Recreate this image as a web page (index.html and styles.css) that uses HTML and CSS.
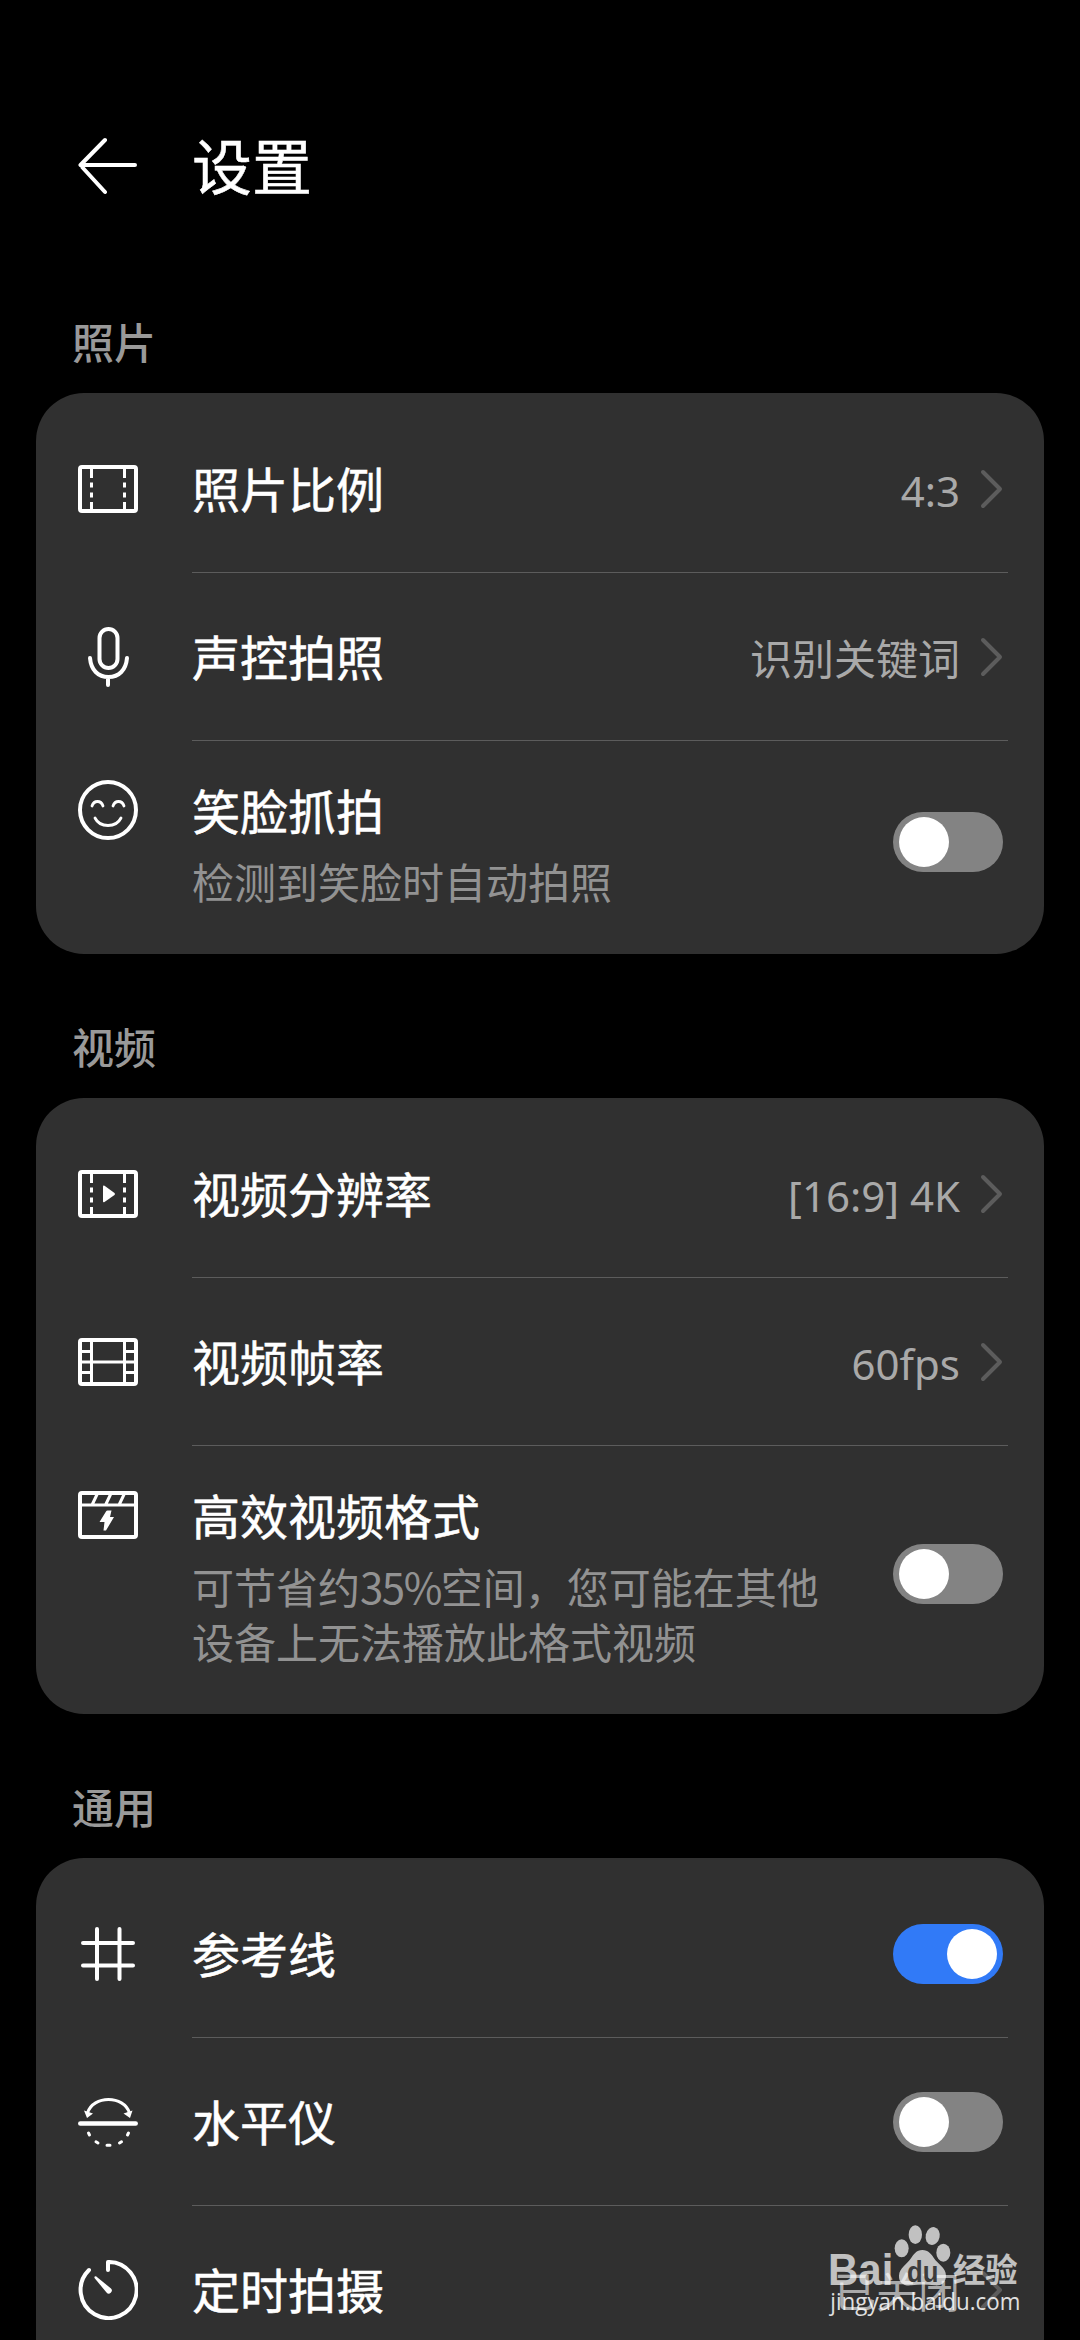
FILE: index.html
```html
<!DOCTYPE html>
<html lang="zh-CN">
<head>
<meta charset="utf-8">
<title>设置</title>
<link rel="stylesheet" href="styles.css">
</head>
<body>
<main class="screen">
  <header class="header">
    <svg class="icon" viewBox="0 0 60 60" stroke-width="4"><path d="M27 5 2.500 30H57M4.500 32.500 27 57"/></svg>
    <h1 class="title">设置</h1>
  </header>

  <h2 class="section">照片</h2>
  <section class="card">
    <div class="row">
      <svg class="icon" viewBox="0 0 60 60"><rect x="2" y="8" width="56" height="44" rx="2"/><path stroke-width="3" d="M13.500 8v11m0 4.500v5m0 5v5m0 4.500v9M46.500 8v11m0 4.500v5m0 5v5m0 4.500v9" stroke-linecap="butt"/></svg>
      <div class="label">照片比例</div>
      <div class="value">4:3</div>
      <svg class="chevron" viewBox="0 0 24 42"><path d="M4 4 21 21 4 38"/></svg>
    </div>
    <div class="row">
      <svg class="icon" viewBox="0 0 60 60"><rect x="21.500" y="2" width="18" height="39" rx="9"/><path d="M12 31c1 12 8 19 18.500 19S48 43 49 31M30 50v8"/></svg>
      <div class="label">声控拍照</div>
      <div class="value">识别关键词</div>
      <svg class="chevron" viewBox="0 0 24 42"><path d="M4 4 21 21 4 38"/></svg>
    </div>
    <div class="row row-detail">
      <svg class="icon" viewBox="0 0 60 60"><circle cx="30" cy="30" r="28"/><path stroke-width="2.800" d="M14 26c2-6 9-6 11 0M35 26c2-6 9-6 11 0M17 38c5 10 21 10 26 0"/></svg>
      <div class="label">笑脸抓拍<p class="hint">检测到笑脸时自动拍照</p></div>
      <div class="toggle"></div>
    </div>
  </section>

  <h2 class="section">视频</h2>
  <section class="card">
    <div class="row">
      <svg class="icon" viewBox="0 0 60 60"><rect x="2" y="8" width="56" height="44" rx="2"/><path stroke-width="3" d="M13.500 8v11m0 4.500v5m0 5v5m0 4.500v9M46.500 8v11m0 4.500v5m0 5v5m0 4.500v9" stroke-linecap="butt"/><path class="solid" d="M25 22.500q0-1.500 1.500-.7L36.500 29q1 1 0 2L26.500 38q-1.500.8-1.500-.7Z"/></svg>
      <div class="label">视频分辨率</div>
      <div class="value">[16:9] 4K</div>
      <svg class="chevron" viewBox="0 0 24 42"><path d="M4 4 21 21 4 38"/></svg>
    </div>
    <div class="row">
      <svg class="icon" viewBox="0 0 60 60"><rect x="2" y="8" width="56" height="44" rx="2"/><path stroke-width="3" d="M13.500 8v44M46.500 8v44M2 19.500h11.500M2 40.500h11.500M46.500 19.500H58M46.500 40.500H58"/><path stroke-width="3" d="M2 30h56"/></svg>
      <div class="label">视频帧率</div>
      <div class="value">60fps</div>
      <svg class="chevron" viewBox="0 0 24 42"><path d="M4 4 21 21 4 38"/></svg>
    </div>
    <div class="row row-detail">
      <svg class="icon" viewBox="0 0 60 60"><rect x="2" y="8" width="56" height="44" rx="2"/><path stroke-width="3" d="M2 20h56M19 9.500 14 20M32.500 9.500 27.500 20M46 9.500 41 20"/><path class="solid" d="M28 26.500q.5-1 1.500-1h4l-1.500 6.500h4l-8 13.500h-2.500l1-8.500h-5Z"/></svg>
      <div class="label">高效视频格式<p class="hint">可节省约<span class="digits">35%</span>空间，您可能在其他<br>设备上无法播放此格式视频</p></div>
      <div class="toggle"></div>
    </div>
  </section>

  <h2 class="section">通用</h2>
  <section class="card">
    <div class="row">
      <svg class="icon" viewBox="0 0 60 60"><path d="M19 5v50M41.500 5v50M5 19h50M5 41.500h50"/></svg>
      <div class="label">参考线</div>
      <div class="toggle on"></div>
    </div>
    <div class="row">
      <svg class="icon" viewBox="0 0 60 60"><path stroke-width="4.500" d="M2.300 31.500h55.400"/><path stroke-width="3" d="M9.500 21C15 3 46 3 51.500 21"/><path class="solid" d="M6 18.500l9 3L9 26ZM54.500 18.500l-9 3 6.500 4.500Z"/><path stroke-width="3" d="M10.500 41l1 2M18 49.800l2 1.200M29 53.200h3M41.500 51l2-1.200M49.500 43l1-2"/></svg>
      <div class="label">水平仪</div>
      <div class="toggle"></div>
    </div>
    <div class="row">
      <svg class="icon" viewBox="0 0 60 60"><path d="M30 10V2A28 28 0 1 1 11 10"/><path class="solid" d="M18 16.200 33 28.500a3 3 0 0 1-4.500 4L16.500 18q-.5-2 1.500-1.800Z"/></svg>
      <div class="label">定时拍摄</div>
      <div class="value">已关闭</div>
      <svg class="chevron" viewBox="0 0 24 42"><path d="M4 4 21 21 4 38"/></svg>
    </div>
  </section>

  <svg class="watermark" viewBox="81 99 585 282">
    <g class="wm-mark">
      <ellipse cx="305" cy="175" rx="21" ry="27"/>
      <ellipse cx="346" cy="134" rx="20" ry="28"/>
      <ellipse cx="398" cy="138" rx="21" ry="27" transform="rotate(12 398 138)"/>
      <ellipse cx="430" cy="188" rx="21" ry="27"/>
      <path d="M367 180c18 0 28 13 35 25 10 16 36 28 36 52 0 22-16 31-34 29-25-3-46-3-70 0-22 3-38-8-37-29 1-23 25-35 36-52 8-12 16-25 34-25Z"/>
      <text class="wm-brand" x="84" y="284" textLength="196" lengthAdjust="spacingAndGlyphs">Bai</text>
      <text class="wm-cjk" x="459" y="275" textLength="194" lengthAdjust="spacingAndGlyphs">经验</text>
    </g>
    <text class="wm-du" x="321" y="277" textLength="94" lengthAdjust="spacingAndGlyphs">du</text>
    <text class="wm-url" x="91" y="361" textLength="570" lengthAdjust="spacingAndGlyphs">jingyan.baidu.com</text>
  </svg>
</main>
</body>
</html>
```
FILE: styles.css
```css
* {
  box-sizing: border-box;
  margin: 0;
  padding: 0;
}

body {
  background: #000;
  color: #fff;
  font-family: "Noto Sans CJK SC", sans-serif;
}

.screen {
  position: relative;
  height: 2340px;
  padding: 0 36px;
  overflow: hidden;
}

.header {
  display: flex;
  align-items: center;
  gap: 54px;
  height: 226px;
  padding: 104px 42px 0;
}

.title {
  padding-bottom: 2px;
  font-size: 60px;
  font-weight: 400;
  line-height: 80px;
  -webkit-text-stroke: 0.5px currentColor;
}

.section {
  height: 144px;
  padding: 60px 36px 0;
  color: #999;
  font-size: 42px;
  font-weight: 500;
  line-height: 64px;
}

.header + .section {
  height: 167px;
  padding-top: 83px;
}

.card {
  padding: 12px 0;
  border-radius: 48px;
  background: #303030;
}

.row {
  position: relative;
  display: flex;
  align-items: center;
  height: 168px;
  padding: 0 41px 0 42px;
}

.row:not(:last-child)::after {
  content: "";
  position: absolute;
  right: 36px;
  bottom: 0;
  left: 156px;
  height: 1px;
  background: #5c5c5c;
}

.icon {
  flex: none;
  width: 60px;
  height: 60px;
  fill: none;
  stroke: #fff;
  stroke-width: 4;
  stroke-linecap: round;
  stroke-linejoin: round;
}

.icon .solid {
  fill: #fff;
  stroke: none;
}

.label {
  flex: 1;
  margin-left: 54px;
  padding-bottom: 4px;
  font-size: 48px;
  line-height: 64px;
  white-space: nowrap;
  -webkit-text-stroke: 0.5px currentColor;
}

.row-detail {
  height: auto;
  padding-top: 36px;
  padding-bottom: 30px;
}

.row-detail .icon {
  align-self: flex-start;
  margin-top: 3px;
}

.row-detail .toggle {
  margin-top: -6px;
}

.hint {
  margin-top: 12px;
  color: #929292;
  font-size: 42px;
  line-height: 55px;
  -webkit-text-stroke: 0;
}

.digits {
  letter-spacing: -1.5px;
}

.value {
  padding-top: 3px;
  color: #a9a9a9;
  font-family: "Noto Sans", "Noto Sans CJK SC", sans-serif;
  font-size: 42px;
  line-height: 60px;
}

.chevron {
  flex: none;
  width: 24px;
  height: 42px;
  margin-left: 19px;
  fill: none;
  stroke: #5c5c5c;
  stroke-width: 4;
  stroke-linecap: round;
  stroke-linejoin: round;
}

.toggle {
  display: flex;
  flex: none;
  align-items: center;
  width: 110px;
  height: 60px;
  padding: 0 6px;
  border-radius: 30px;
  background: #838383;
}

.toggle::before {
  content: "";
  width: 50px;
  height: 50px;
  border-radius: 50%;
  background: #fff;
}

.toggle.on {
  justify-content: flex-end;
  background: #317af7;
}

.watermark {
  position: absolute;
  top: 2223px;
  left: 827px;
  width: 195px;
  height: 94px;
}

.wm-mark {
  fill: #fff;
  opacity: 0.7;
}

.wm-brand {
  font: 700 131px "Liberation Sans", sans-serif;
}

.wm-cjk {
  font: 700 100px "Noto Sans CJK SC", sans-serif;
}

.wm-du {
  fill: #3c3c3c;
  font: 700 90px "Liberation Sans", sans-serif;
}

.wm-url {
  fill: #fff;
  font: 500 72px "Open Sans", sans-serif;
  opacity: 0.85;
}
```
